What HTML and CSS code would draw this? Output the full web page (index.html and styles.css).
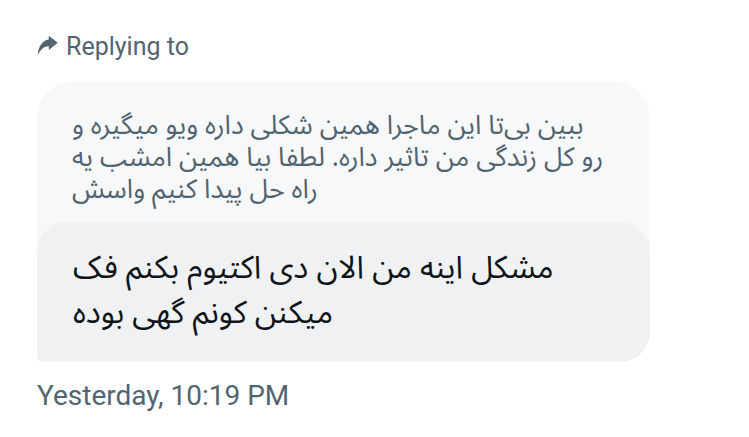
FILE: index.html
```html
<!DOCTYPE html>
<html lang="fa">
<head>
<meta charset="utf-8">
<link rel="stylesheet" href="styles.css">
</head>
<body>
<div class="thread">
  <div class="replying">
    <svg class="reply-icon" viewBox="0 0 20 20" width="21" height="21" aria-hidden="true">
      <path d="M11.2 0.6 L19.8 7.4 L11.2 14.2 V10.6 C6.6 10.6 3.6 13.4 0.8 19 C1.2 11.4 4.8 5 11.2 4.2 Z"/>
    </svg>
    <span>Replying to</span>
  </div>
  <div class="quoted" dir="rtl">ببین بی‌تا این ماجرا همین شکلی داره ویو میگیره و<br>رو کل زندگی من تاثیر داره. لطفا بیا همین امشب یه<br>راه حل پیدا کنیم واسش</div>
  <div class="message" dir="rtl">مشکل اینه من الان دی اکتیوم بکنم فک<br>میکنن کونم گهی بوده</div>
  <div class="timestamp">Yesterday, 10:19 PM</div>
</div>
</body>
</html>
```
FILE: styles.css
```css
html, body {
  margin: 0;
  padding: 0;
  background: #ffffff;
}

.thread {
  width: 613px;
  padding: 33px 0 0 37px;
  display: flex;
  flex-direction: column;
  font-family: Roboto, "Liberation Sans", sans-serif;
}

.replying {
  display: flex;
  align-items: center;
  gap: 8px;
  padding-left: 0;
  color: #536471;
  font-size: 25px;
  line-height: 28px;
}

.reply-icon {
  fill: #536471;
  margin-top: -3px;
}

.quoted {
  margin-top: 21px;
  background: #f7f8f9;
  border-radius: 36px 36px 0 0;
  padding: 28px 10px 44px 35px;
  color: #536471;
  font-family: "Noto Sans Arabic", "DejaVu Sans", sans-serif;
  font-size: 26.7px;
  line-height: 32px;
  text-align: left;
  white-space: nowrap;
}

.message {
  margin-top: -28px;
  background: #eff1f3;
  border-radius: 30px 30px 30px 6px;
  padding: 24px 10px 26px 36px;
  color: #0f1419;
  font-family: "Noto Sans Arabic", "DejaVu Sans", sans-serif;
  font-size: 31.5px;
  line-height: 45px;
  text-align: left;
  white-space: nowrap;
}

.timestamp {
  margin-top: 17px;
  color: #536471;
  font-size: 28px;
  line-height: 33px;
}
```
